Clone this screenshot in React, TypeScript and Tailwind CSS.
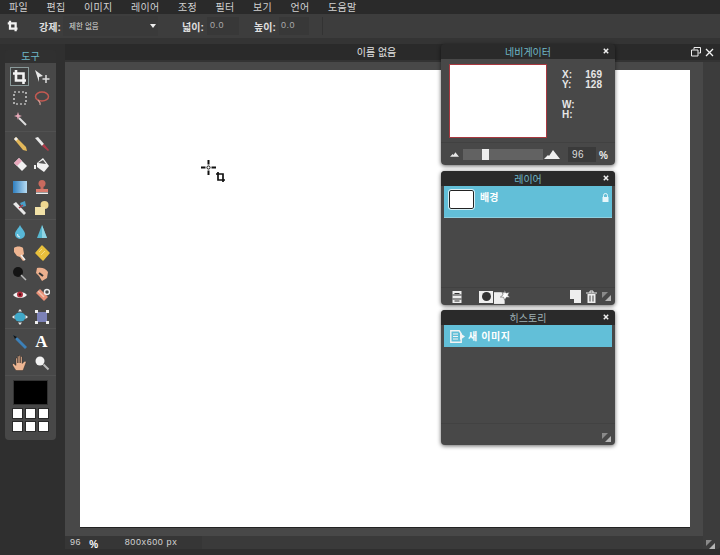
import React from "react";

const KR = "font-['Liberation_Sans','Noto_Sans_CJK_KR',sans-serif]";

const menus = ["파일", "편집", "이미지", "레이어", "조정", "필터", "보기", "언어", "도움말"];

function S({ children, size = 16 }: { children: React.ReactNode; size?: number }) {
  return (
    <svg width={size} height={size} viewBox="0 0 16 16" className="block">
      {children}
    </svg>
  );
}

const CropPath = ({ c = "#f2f2f2", w = 2.6 }: { c?: string; w?: number }) => (
  <path d="M4 1v10.500h10M1 4.500h10.500V15" stroke={c} strokeWidth={w} fill="none" />
);

const tools: React.ReactNode[][] = [
  [
    <S><CropPath /></S>,
    <S><path d="M1 1l8 6-4 1v5z" fill="#e8e8e8" /><path d="M12 6v8M8.500 10h7" stroke="#ddd" strokeWidth="1.500" /></S>,
    <S><rect x="2" y="2" width="12" height="12" fill="none" stroke="#eee" strokeWidth="1.200" strokeDasharray="2 2" /></S>,
    <S><ellipse cx="8" cy="6.500" rx="6.500" ry="4.500" fill="none" stroke="#c45a52" strokeWidth="1.500" /><path d="M4 10c1 2 3 2 2 5" stroke="#d8a098" strokeWidth="1.200" fill="none" /></S>,
    <S><path d="M7 7l7 7" stroke="#ddd" strokeWidth="2" /><path d="M6 1l1 3 3 1-3 1-1 3-1-3-3-1 3-1z" fill="#e6a8b8" /></S>,
    null,
  ],
  [
    <S><path d="M2 3l2-2 10 10 1 4-4-1z" fill="#e3b85a" /><path d="M2 3l2-2 2 2-2 2z" fill="#eee" /></S>,
    <S><path d="M1 2l3-1 6 7-2 2z" fill="#e8e8e8" /><path d="M8 10l2-2 5 6-1 1z" fill="#b23b4a" /></S>,
    <S><path d="M2 6l5-5 8 8-5 5z" fill="#f0f0f0" /><path d="M2 6l5-5 3 3-5 5z" fill="#e8a8bc" /></S>,
    <S><path d="M3 6l6-5 6 8-5 6-7-5z" fill="#f2f2f2" /><path d="M4 6l5-3 3 4z" fill="#555" /><path d="M1 8v4" stroke="#eee" strokeWidth="2" /></S>,
    <S><defs><linearGradient id="g1" x1="0" x2="1" y1="0" y2="0"><stop offset="0" stopColor="#2f7fc0" /><stop offset="1" stopColor="#b8dcf2" /></linearGradient></defs><rect x="1" y="2" width="14" height="12" fill="url(#g1)" /></S>,
    <S><circle cx="8" cy="4.500" r="3.500" fill="#c96a5e" /><rect x="6.500" y="7" width="3" height="3" fill="#c96a5e" /><rect x="2" y="10" width="12" height="3" fill="#d97a6c" /><rect x="2" y="13.500" width="12" height="1.500" fill="#eee" /></S>,
    <S><path d="M1 4l3-2 10 11-2 2z" fill="#e8e8e8" /><path d="M8 3l5-2 1 5-4 1z" fill="#4a9fc8" /><path d="M7 8l4-3" stroke="#b23b4a" strokeWidth="1.500" /></S>,
    <S><circle cx="10.500" cy="5" r="4" fill="#f0d890" /><rect x="1" y="7" width="10" height="8" fill="#f2e2a8" /></S>,
  ],
  [
    <S><path d="M8 1c2 4 5 6 5 9a5 5 0 0 1-10 0c0-3 3-5 5-9z" fill="#58b8d8" /><path d="M5.500 10c0 2 1 3 2.500 3" stroke="#cde8f2" strokeWidth="1.200" fill="none" /></S>,
    <S><path d="M8 1l5 13H3z" fill="#58b8d0" /><path d="M8 1l5 13H8z" fill="#8fd4e4" /></S>,
    <S><path d="M2 3c2-2 7-2 9 0l1 6-2 2 3 4-2 1-3-4-3-1-3-4z" fill="#eeb592" /><path d="M9 10l4 5" stroke="#f2f2f2" strokeWidth="1.500" /></S>,
    <S><path d="M8 1l7 7-6 7-7-7z" fill="#e8c03c" stroke="#e8c03c" strokeWidth="1.500" strokeLinejoin="round" /><path d="M5 7l3-3M7 10l4-4" stroke="#f4dc84" /></S>,
    <S><circle cx="6" cy="6" r="5" fill="#141414" /><path d="M9 9l5 5" stroke="#bbb" strokeWidth="1.500" /></S>,
    <S><path d="M3 2c4-1 9 0 11 4l-1 6-5 3-3-5-3-3z" fill="#edb08e" /><path d="M5 7l4 3" stroke="#333" strokeWidth="2" /></S>,
    <S><path d="M1 8c3-4 11-4 14 0-3 4-11 4-14 0z" fill="#f4f4f4" /><circle cx="8" cy="7.500" r="3" fill="#b03040" /><circle cx="8" cy="7.500" r="1.200" fill="#4a1010" /></S>,
    <S><path d="M2 6l4-4 8 8-4 4z" fill="#e88f76" /><path d="M4 4l6 6" stroke="#f2c4b0" strokeWidth="1.500" /><circle cx="13" cy="5" r="2.500" fill="none" stroke="#eee" strokeWidth="1.500" /></S>,
    <S><ellipse cx="8" cy="8" rx="5.500" ry="4.500" fill="#40a8c8" /><path d="M8 0l2 2.500H6zM8 16l-2-2.500h4zM0 8l2.500-2v4zM16 8l-2.500 2V6z" fill="#eee" /></S>,
    <S><rect x="3" y="3" width="10" height="10" fill="#7c82b8" /><path d="M1 1h3v3H1zM12 1h3v3h-3zM1 12h3v3H1zM12 12h3v3h-3z" fill="#eee" /></S>,
  ],
  [
    <S><path d="M1 1l5 3 9 9-2 2-9-9z" fill="#3c80b8" /><path d="M1 1l4 2-2 2z" fill="#111" /></S>,
    <span className="font-['Liberation_Serif',serif] font-bold text-[17px] leading-4 text-white">A</span>,
    <S><path d="M4 15.500c-2-3-3.500-5-3.500-6l1-1 2.500 2V3h1.500v5V1h1.500v7V.5H8.500v7.500V1.500H10v7l3-2.500 1.200 1-3.200 8.500z" fill="#edb592" stroke="#222" strokeWidth=".4" /></S>,
    <S><circle cx="6" cy="6" r="4.500" fill="#f2f2f2" /><path d="M9.500 9.500l5 5" stroke="#bbb" strokeWidth="2" /></S>,
  ],
];

function PanelTitle({ title, cyan = true }: { title: string; cyan?: boolean }) {
  return (
    <div className="relative h-[15px] shrink-0 bg-[#2a2a2a] flex items-center justify-center rounded-t-[4px]">
      <span className={`pt-[2px] text-[10px] leading-none ${cyan ? "text-[#6fb8c8]" : "text-[#9fb0b4]"}`}>{title}</span>
      <svg width="6" height="6" viewBox="0 0 6 6" className="absolute right-[6px] top-[4px]">
        <path d="M.8.800l4.400 4.400M5.200.800L.8 5.200" stroke="#f0f0f0" strokeWidth="1.500" />
      </svg>
    </div>
  );
}

function Resize() {
  return (
    <svg width="9" height="9" viewBox="0 0 9 9" className="block">
      <path d="M0 0h6L0 6z" fill="#8a8a8a" />
      <path d="M9 9H3l6-6z" fill="#b5b5b5" />
    </svg>
  );
}

export default function App() {
  return (
    <div className={`relative w-[720px] h-[555px] overflow-hidden bg-[#2f2f2f] ${KR}`}>
      {/* menu */}
      <div className="h-[14px] bg-[#2a2a2a] flex items-center pl-[9px] pt-[1px] gap-[18.500px] text-[10px] leading-none tracking-[0.3px] text-[#d2d2d2]">
        {menus.map((m) => (
          <span key={m}>{m}</span>
        ))}
      </div>

      {/* options bar */}
      <div className="h-[24px] bg-[#3d3d3d] flex items-center pl-[7px] text-[#e0e0e0]">
        <S size={12}><CropPath w={3} /></S>
        <span className="ml-[20px] pt-[2px] w-[23px] text-[10px] font-bold whitespace-nowrap">강제:</span>
        <div className="ml-[1px] w-[95px] h-[20px] bg-[#3a3a3a] flex items-center justify-between pl-[6px] pr-[2px]">
          <span className="text-[7.500px] pt-[1px] text-[#d8d8d8]">제한 없음</span>
          <span className="w-0 h-0 border-x-[3.500px] border-x-transparent border-t-[4px] border-t-[#eee]" />
        </div>
        <span className="ml-[24px] pt-[2px] w-[24px] text-[10px] font-bold whitespace-nowrap">넓이:</span>
        <div className="ml-[1px] w-[32px] h-[18px] bg-[#383838] pl-[3px] pt-[1px] text-[9px] leading-[15px] text-[#aaa] tracking-[0.5px]">0.0</div>
        <span className="ml-[15px] pt-[2px] w-[24px] text-[10px] font-bold whitespace-nowrap">높이:</span>
        <div className="ml-[1px] w-[30px] h-[18px] bg-[#383838] pl-[2px] pt-[1px] text-[9px] leading-[15px] text-[#aaa] tracking-[0.5px]">0.0</div>
        <div className="ml-[13px] w-[1px] h-[18px] bg-[#333]" />
      </div>

      {/* sub-strip */}
      <div className="h-[6px] bg-[#343434]" />

      {/* work area */}
      <div className="flex h-[511px]">
        {/* tools */}
        <div className="ml-[5px] w-[51px] mt-[6px] h-[390px] flex flex-col">
          <div className="h-[13px] shrink-0 flex items-center justify-center pt-[1px] text-[10px] leading-none text-[#6fb8c8] bg-[#303030] rounded-t-[3px]">도구</div>
          <div className="flex-1 bg-[#484848] rounded-b-[4px] flex flex-col items-center">
            {tools.map((group, gi) => (
              <div
                key={gi}
                className={`w-full grid grid-cols-[22px_22px] justify-center justify-items-center items-center auto-rows-[21.200px] ${gi === 0 ? "pt-[3px] pb-[1px]" : gi === 2 ? "pt-[1px] pb-[1px] border-t border-[#515151]" : "pt-[2px] pb-[1px] border-t border-[#515151]"}`}
              >
                {group.map((icon, i) => (
                  <div
                    key={i}
                    className={`flex items-center justify-center ${gi === 0 && i === 0 ? "w-[19px] h-[19px] border border-[#8a9a9a] bg-[#3f3f3f]" : "w-[16px] h-[16px]"}`}
                  >
                    {icon}
                  </div>
                ))}
              </div>
            ))}
            <div className="w-full border-t border-[#515151] pt-[4px] flex flex-col items-center">
              <div className="w-[35px] h-[25px] bg-black border border-[#333]" />
              <div className="mt-[3px] grid grid-cols-3 gap-x-[2px] gap-y-[2px]">
                {[0, 1, 2, 3, 4, 5].map((i) => (
                  <div key={i} className="w-[11px] h-[11px] bg-white border border-[#2a2a2a]" />
                ))}
              </div>
            </div>
          </div>
        </div>

        {/* document window */}
        <div className="ml-[9px] flex-1 h-[505px] flex flex-col">
          <div className="relative h-[16px] shrink-0 bg-[#2a2a2a] flex items-center justify-center">
            <span className="pt-[2px] text-[10px] leading-none text-[#e2e2e2] ml-[-32px]">이름 없음</span>
            <div className="absolute right-[6px] top-[3px] flex items-center gap-[4px]">
              <svg width="10" height="10" viewBox="0 0 10 10">
                <path d="M3 2.500V.5h6.500v5.500H7.500M.5 3h6.500v6H.5z" fill="none" stroke="#eee" strokeWidth="1" />
              </svg>
              <svg width="9" height="9" viewBox="0 0 9 9">
                <path d="M1 1l7 7M8 1L1 8" stroke="#f2f2f2" strokeWidth="1.300" />
              </svg>
            </div>
          </div>
          <div className="h-[2px] shrink-0 bg-[#333]" />
          <div className="flex-1 flex min-h-0">
            <div className="flex-1 flex flex-col min-w-0">
              <div className="flex-1 bg-[#484848] pl-[15px] pr-[13px] pt-[8px] pb-[8px] flex">
                <div className="relative flex-1 bg-white border-b border-[#222]">
                  <svg width="27" height="24" viewBox="0 0 27 24" className="absolute left-[120px] top-[89px]">
                    <circle cx="8.500" cy="8.500" r="1.600" fill="none" stroke="#111" strokeWidth="1" />
                    <path d="M1 8.500h4.500M11.500 8.500H16M8.500 1v4.500M8.500 11.500V16" stroke="#111" strokeWidth="2" />
                    <path d="M18 13v8h7M16 15h7v8" stroke="#111" strokeWidth="1.700" fill="none" />
                  </svg>
                </div>
              </div>
              <div className="h-[13px] shrink-0 bg-[#3a3a3a] flex items-center text-[#d4d4d4]">
                <div className="w-[137px] h-[13px] bg-[#363636] flex items-center pl-[5px] text-[9px] tracking-[0.6px] whitespace-nowrap">
                  <span>96</span>
                  <span className="ml-[8px] pt-[3px] text-[10px] font-bold text-white">%</span>
                  <span className="ml-[26px]">800x600 px</span>
                </div>
              </div>
            </div>
            <div className="w-[17px] shrink-0 bg-[#3c3c3c] rounded-br-[3px] flex items-end justify-start pl-[3px]">
              <Resize />
            </div>
          </div>
        </div>
      </div>

      {/* navigator */}
      <div className="absolute left-[441px] top-[44px] w-[174px] rounded-[4px] shadow-[0_1px_4px_rgba(0,0,0,0.6)]">
        <PanelTitle title="네비게이터" />
        <div className="h-[106px] bg-[#484848] rounded-b-[4px] flex flex-col">
          <div className="flex h-[84px] shrink-0 border-b border-[#414141] pl-[8px] pt-[5px]">
            <div className="w-[98px] h-[74px] bg-white border border-[#a8383f] shadow-[inset_0_0_0_1px_white]" />
            <div className="ml-[15px] w-[40px] text-[10px] leading-[10px] font-bold text-[#e6e6e6] pt-[6px]">
              <div className="flex justify-between"><span>X:</span><span>169</span></div>
              <div className="flex justify-between"><span>Y:</span><span>128</span></div>
              <div className="mt-[10px]">W:</div>
              <div>H:</div>
            </div>
          </div>
          <div className="flex-1 flex items-center pl-[9px]">
            <svg width="9" height="5" viewBox="0 0 10 5"><path d="M0 5l3-3 1 1 2-3 4 5z" fill="#e8e8e8" /></svg>
            <div className="relative ml-[4px] w-[80px] h-[11px] bg-[#626262]">
              <div className="absolute left-[19px] top-0 w-[7px] h-[11px] bg-[#eee]" />
            </div>
            <svg width="16" height="9" viewBox="0 0 16 9" className="ml-[1px]"><path d="M0 9l4-4 1 1 4-6 7 9z" fill="#f0f0f0" /></svg>
            <div className="ml-[8px] w-[28px] h-[15px] bg-[#3a3a3a] text-[10px] leading-[15px] pl-[4px] tracking-[0.5px] text-[#ddd]">96</div>
            <span className="ml-[3px] pt-[2px] text-[10px] font-bold text-[#eee]">%</span>
          </div>
        </div>
      </div>

      {/* layers */}
      <div className="absolute left-[441px] top-[171px] w-[174px] rounded-[4px] bg-[#484848] shadow-[0_1px_4px_rgba(0,0,0,0.6)] flex flex-col h-[134px]">
        <PanelTitle title="레이어" />
        <div className="mx-[3px] h-[32px] bg-[#62bfd8] flex pl-[5px] pt-[4px] border-b border-[#8fd0e0]">
          <div className="w-[25px] h-[19px] bg-white border border-[#222] rounded-[2px] outline outline-1 outline-[#d8f0f6]" />
          <span className="ml-[6px] pt-[2px] text-[10px] leading-[12px] font-bold text-white">배경</span>
          <svg width="7" height="9" viewBox="0 0 7 9" className="ml-auto mr-[3px] mt-[3px]">
            <path d="M1.500 4V2.500a2 2 0 0 1 4 0V4" fill="none" stroke="#e6f6fa" strokeWidth="1" />
            <rect x=".5" y="4" width="6" height="5" fill="#e6f6fa" />
          </svg>
        </div>
        <div className="flex-1" />
        <div className="h-[18px] border-t border-[#414141] flex items-center pl-[11px] pr-[4px]">
          <svg width="10" height="12" viewBox="0 0 9 12">
            <rect width="9" height="12" fill="#eee" />
            <path d="M0 4h9M0 8h9M2 2.500h5M2 10h5" stroke="#333" strokeWidth="1" />
          </svg>
          <div className="ml-[17px] w-[14px] h-[12px] bg-[#eee] flex items-center justify-center">
            <div className="w-[9px] h-[9px] rounded-full bg-[#333]" />
          </div>
          <svg width="16" height="14" viewBox="0 0 15 13" className="ml-[1px]">
            <rect y="2" width="10" height="11" fill="#eee" />
            <path d="M10 0l1.200 2.800L14.500 2l-1.500 2.800L15 7l-3.300-.3L10 9.500 9 6.700 6 6.500 8.500 4.500 7.500 2l2 .8z" fill="#fff" stroke="#444" strokeWidth=".5" />
          </svg>
          <svg width="11" height="13" viewBox="0 0 11 13" className="ml-auto">
            <path d="M0 0h11v13H4V9H0z" fill="#eee" />
          </svg>
          <svg width="11" height="13" viewBox="0 0 11 13" className="ml-[5px]">
            <path d="M0 3h11M4 3V1h3v2" stroke="#eee" fill="none" />
            <path d="M1.500 4h8v9h-8z" fill="#eee" />
            <path d="M4 5.500v6M7 5.500v6" stroke="#444" />
          </svg>
          <div className="ml-[5px]"><Resize /></div>
        </div>
      </div>

      {/* history */}
      <div className="absolute left-[441px] top-[310px] w-[174px] h-[135px] rounded-[4px] bg-[#484848] shadow-[0_1px_4px_rgba(0,0,0,0.6)] flex flex-col">
        <PanelTitle title="히스토리" cyan={false} />
        <div className="mx-[3px] h-[22px] bg-[#62bfd8] flex items-center pl-[6px]">
          <svg width="15" height="13" viewBox="0 0 15 13">
            <path d="M.8.800h8.400l2 3v8.400H.8z" fill="#62bfd8" stroke="#f4f4f4" strokeWidth="1.400" />
            <path d="M3 4h5M3 6.500h5M3 9h5" stroke="#f4f4f4" strokeWidth="1" />
            <path d="M10 3l5 3.500-5 3.500z" fill="#f4f4f4" />
          </svg>
          <span className="ml-[3px] pt-[1px] text-[10px] font-bold text-white tracking-[0.6px]">새 이미지</span>
        </div>
        <div className="flex-1" />
        <div className="h-[22px] border-t border-[#424242] flex items-end justify-end pr-[4px] pb-[3px]"><Resize /></div>
      </div>
    </div>
  );
}
